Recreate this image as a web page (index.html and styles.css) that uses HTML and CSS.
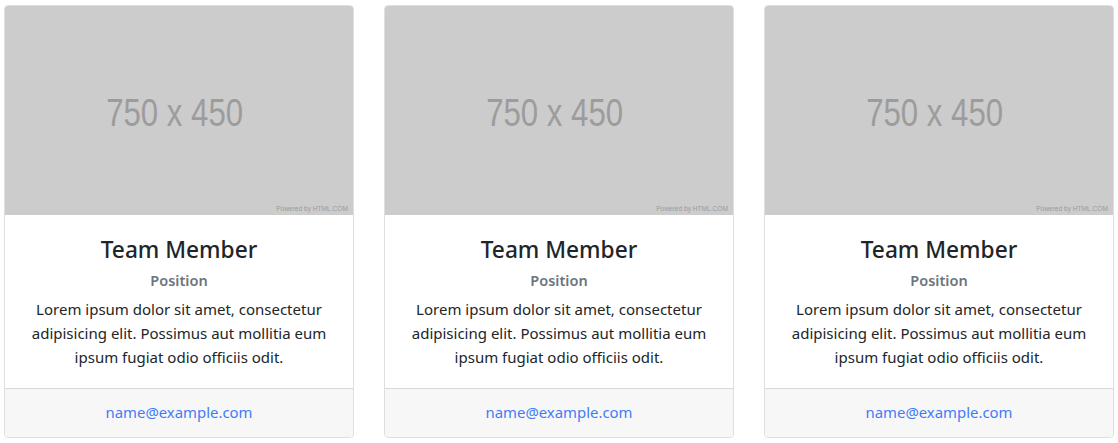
FILE: index.html
```html
<!DOCTYPE html>
<html>
<head>
<meta charset="utf-8">
<link rel="stylesheet" href="styles.css">
</head>
<body>
<div class="row">
  <div class="card">
    <div class="card-img"><span class="ph">750 x 450</span><span class="pw">Powered by HTML.COM</span></div>
    <div class="card-body">
      <h4 class="card-title">Team Member</h4>
      <h6 class="card-subtitle">Position</h6>
      <p class="card-text">Lorem ipsum dolor sit amet, consectetur adipisicing elit. Possimus aut mollitia eum ipsum fugiat odio officiis odit.</p>
    </div>
    <div class="card-footer"><a href="#">name@example.com</a></div>
  </div>
  <div class="card">
    <div class="card-img"><span class="ph">750 x 450</span><span class="pw">Powered by HTML.COM</span></div>
    <div class="card-body">
      <h4 class="card-title">Team Member</h4>
      <h6 class="card-subtitle">Position</h6>
      <p class="card-text">Lorem ipsum dolor sit amet, consectetur adipisicing elit. Possimus aut mollitia eum ipsum fugiat odio officiis odit.</p>
    </div>
    <div class="card-footer"><a href="#">name@example.com</a></div>
  </div>
  <div class="card">
    <div class="card-img"><span class="ph">750 x 450</span><span class="pw">Powered by HTML.COM</span></div>
    <div class="card-body">
      <h4 class="card-title">Team Member</h4>
      <h6 class="card-subtitle">Position</h6>
      <p class="card-text">Lorem ipsum dolor sit amet, consectetur adipisicing elit. Possimus aut mollitia eum ipsum fugiat odio officiis odit.</p>
    </div>
    <div class="card-footer"><a href="#">name@example.com</a></div>
  </div>
</div>
</body>
</html>
```
FILE: styles.css
```css
* { box-sizing: border-box; }
body {
  margin: 0;
  background: #fff;
  font-family: "Noto Sans", "Open Sans", sans-serif;
  font-size: 15px;
  line-height: 24px;
  color: #212529;
}
.row {
  display: flex;
  gap: 30px;
  padding: 5px 4px;
}
.card {
  width: 350px;
  display: flex;
  flex-direction: column;
  border: 1px solid rgba(0,0,0,.125);
  border-radius: 4px;
  overflow: hidden;
  text-align: center;
}
.card-img {
  position: relative;
  height: 209px;
  background: #ccc;
  display: flex;
  align-items: center;
  justify-content: center;
}
.ph {
  font-family: "Liberation Sans", Arial, sans-serif;
  font-size: 39px;
  color: #9c9c9c;
  transform: translate(-4px, 2px) scaleX(0.8);
  line-height: 1;
  white-space: nowrap;
}
.pw {
  position: absolute;
  right: 5px;
  bottom: 3px;
  font-family: "Liberation Sans", Arial, sans-serif;
  font-size: 6.6px;
  line-height: 6px;
  color: #9a9a9a;
}
.card-body {
  padding: 21px 20px 19px;
}
.card-title {
  margin: 0 0 12px;
  font-size: 22.7px;
  line-height: 28.8px;
  font-weight: 500;
}
.card-subtitle {
  margin: -6px 0 7px;
  font-size: 14.5px;
  line-height: 19.2px;
  font-weight: 600;
  color: #6c757d;
}
.card-text {
  margin: 0;
}
.card-footer {
  padding: 11px 20px 13px;
  background: #f7f7f7;
  border-top: 1px solid rgba(0,0,0,.125);
}
.card-footer a {
  color: #3f7cf7;
  font-size: 14.9px;
  text-decoration: none;
}
```
